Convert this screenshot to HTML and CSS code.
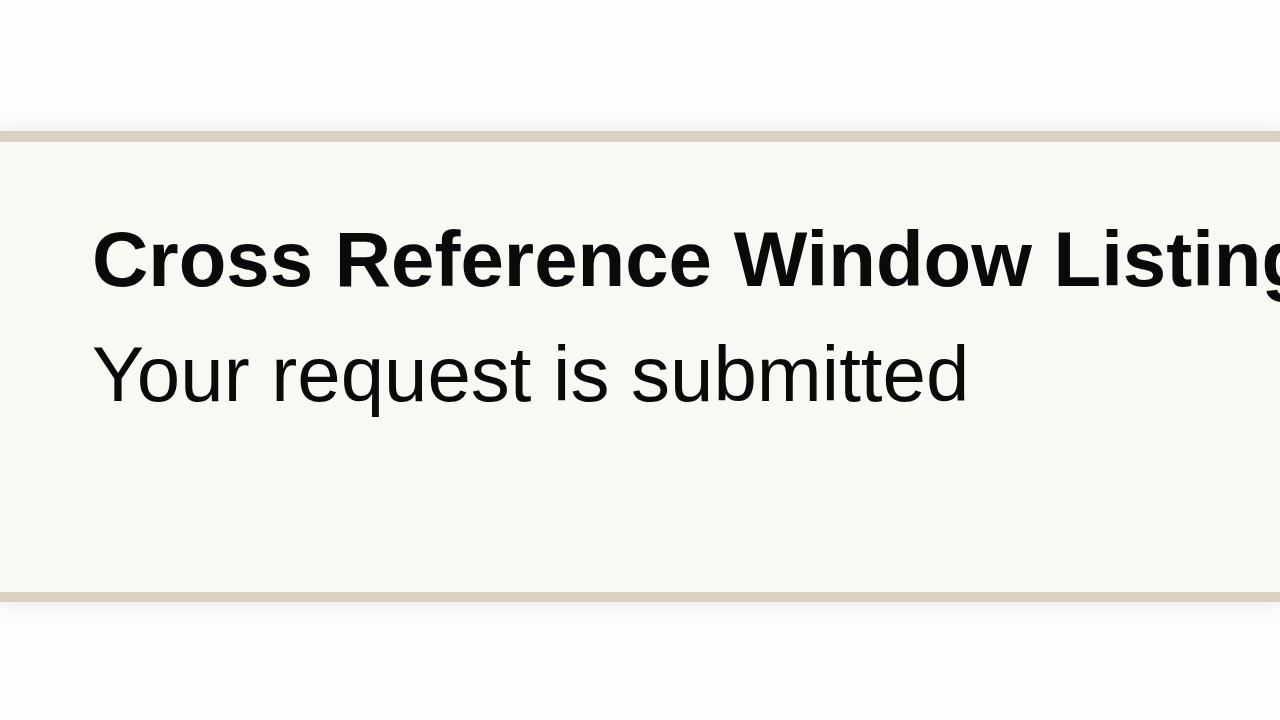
FILE: index.html
```html
<!DOCTYPE html>
<html lang="en">
<head>
<meta charset="utf-8">
<title>Cross Reference Window Listing</title>
<link rel="stylesheet" href="styles.css">
</head>
<body>
<div class="page">
  <div class="panel">
    <h1 class="title">Cross Reference Window Listing</h1>
    <p class="message">Your request is submitted</p>
  </div>
</div>
</body>
</html>
```

FILE: styles.css
```css
html, body {
  margin: 0;
  padding: 0;
  background: #fdfdfd;
  overflow: hidden;
}
.page {
  width: 1280px;
  height: 720px;
  padding-top: 131px;
  box-sizing: border-box;
}
.panel {
  background: #f9f8f3;
  border-top: 11px solid #d9d2c3;
  border-bottom: 10px solid #d9d2c3;
  box-shadow: 0 0 20px rgba(0, 0, 0, 0.10);
  padding: 60px 0 0 92px;
  box-sizing: border-box;
  height: 471px;
  font-family: "Liberation Sans", Arial, sans-serif;
  color: #0a0a0a;
  white-space: nowrap;
  overflow: hidden;
}
.title {
  margin: 0;
  font-size: 78px;
  line-height: 115px;
  font-weight: bold;
}
.message {
  margin: 0;
  font-size: 78px;
  line-height: 115px;
  font-weight: normal;
}
```
